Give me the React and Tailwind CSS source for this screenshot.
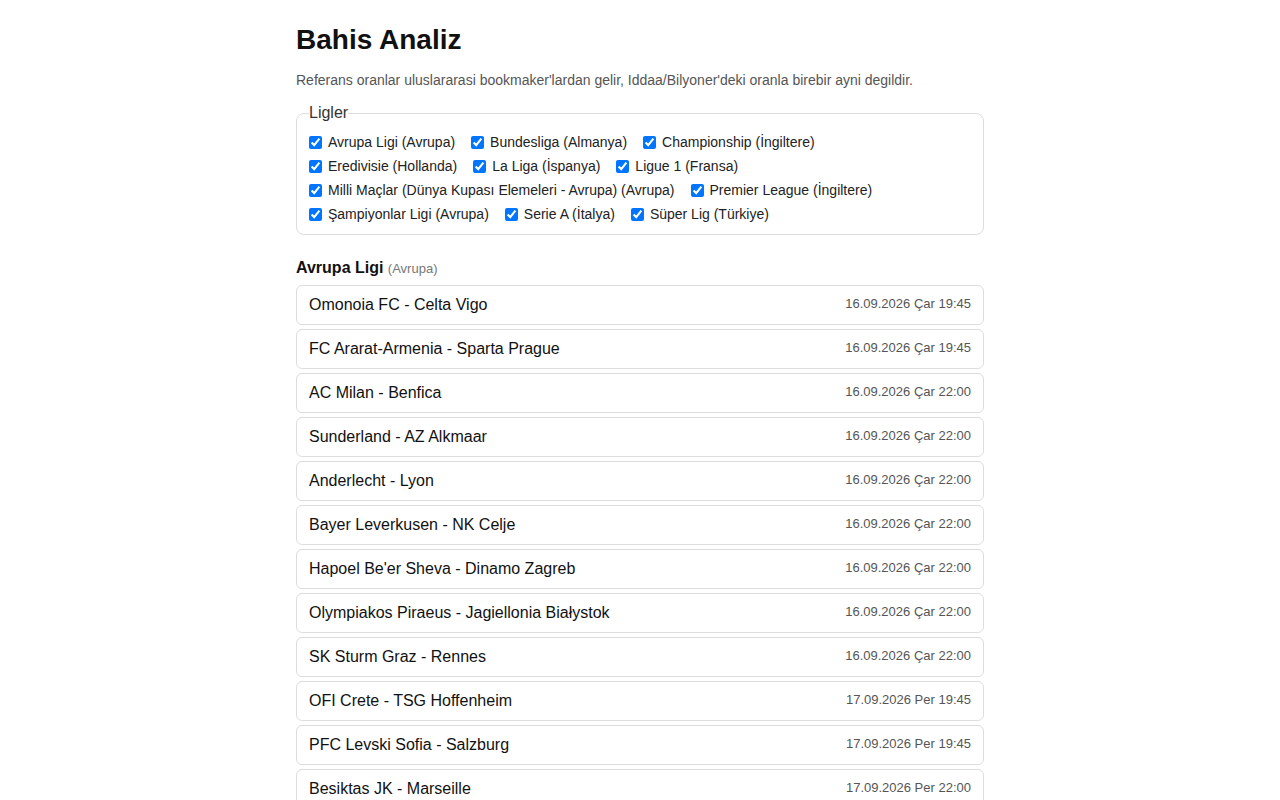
import React from "react";

const leagues = [
  ["Avrupa Ligi (Avrupa)", "Bundesliga (Almanya)", "Championship (İngiltere)"],
  ["Eredivisie (Hollanda)", "La Liga (İspanya)", "Ligue 1 (Fransa)"],
  ["Milli Maçlar (Dünya Kupası Elemeleri - Avrupa) (Avrupa)", "Premier League (İngiltere)"],
  ["Şampiyonlar Ligi (Avrupa)", "Serie A (İtalya)", "Süper Lig (Türkiye)"],
];

const matches = [
  ["Omonoia FC - Celta Vigo", "16.09.2026 Çar 19:45"],
  ["FC Ararat-Armenia - Sparta Prague", "16.09.2026 Çar 19:45"],
  ["AC Milan - Benfica", "16.09.2026 Çar 22:00"],
  ["Sunderland - AZ Alkmaar", "16.09.2026 Çar 22:00"],
  ["Anderlecht - Lyon", "16.09.2026 Çar 22:00"],
  ["Bayer Leverkusen - NK Celje", "16.09.2026 Çar 22:00"],
  ["Hapoel Be'er Sheva - Dinamo Zagreb", "16.09.2026 Çar 22:00"],
  ["Olympiakos Piraeus - Jagiellonia Białystok", "16.09.2026 Çar 22:00"],
  ["SK Sturm Graz - Rennes", "16.09.2026 Çar 22:00"],
  ["OFI Crete - TSG Hoffenheim", "17.09.2026 Per 19:45"],
  ["PFC Levski Sofia - Salzburg", "17.09.2026 Per 19:45"],
  ["Besiktas JK - Marseille", "17.09.2026 Per 22:00"],
  ["Ferencvaros - Aston Villa", "17.09.2026 Per 22:00"],
];

export default function App() {
  return (
    <div className="min-h-screen bg-white text-[#111]" style={{ fontFamily: '"Liberation Sans", Arial, sans-serif' }}>
      <div className="mx-auto w-[688px] pt-[24px] pb-10">
        <h1 className="text-[28px] leading-[32px] font-bold text-[#111]">Bahis Analiz</h1>
        <p className="mt-[14px] text-[14px] leading-[20px] text-[#555]">
          Referans oranlar uluslararasi bookmaker'lardan gelir, Iddaa/Bilyoner'deki oranla birebir ayni degildir.
        </p>
        <fieldset className="mt-[14px] border border-[#ddd] rounded-[8px] px-3 pt-0 pb-2">
          <legend className="text-[16px] leading-[18px] text-[#333] px-0">Ligler</legend>
          <div className="pt-2">
            {leagues.map((row, i) => (
              <div key={i} className="flex h-6 items-center gap-4">
                {row.map((l) => (
                  <label key={l} className="flex items-center gap-[6px] text-[14px] text-[#222]">
                    <input type="checkbox" defaultChecked className="m-0 w-[13px] h-[13px]" />
                    <span>{l}</span>
                  </label>
                ))}
              </div>
            ))}
          </div>
        </fieldset>
        <h2 className="mt-[24px] text-[16px] leading-[18px] font-bold text-[#111]">
          Avrupa Ligi <span className="text-[13px] font-normal text-[#777]">(Avrupa)</span>
        </h2>
        <div className="mt-[7px] flex flex-col gap-1">
          {matches.map(([m, d]) => (
            <div key={m} className="flex items-start justify-between h-10 border border-[#ddd] rounded-[6px] px-3 pt-[10px]">
              <span className="text-[16px] leading-[18px] text-[#111]">{m}</span>
              <span className="text-[13px] leading-[15px] text-[#555]">{d}</span>
            </div>
          ))}
        </div>
      </div>
    </div>
  );
}
